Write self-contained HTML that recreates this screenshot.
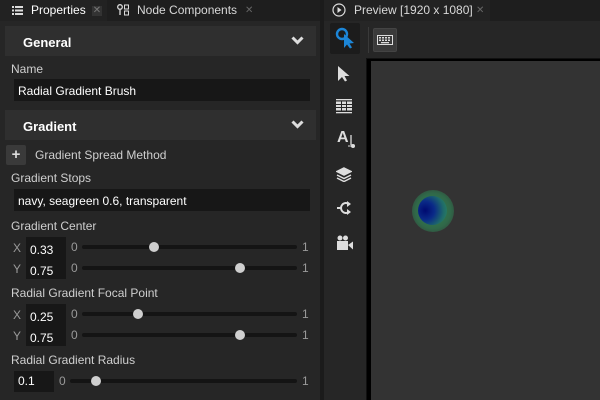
<!DOCTYPE html>
<html><head><style>
*{margin:0;padding:0;box-sizing:border-box}
body{width:600px;height:400px;background:#1b1b1b;font-family:"Liberation Sans",sans-serif;font-size:12px;color:#d0d0d0;position:relative;overflow:hidden}
.a{position:absolute}
.hdr{position:absolute;left:5px;width:311px;height:30px;background:#2f2f2f;font-weight:bold;color:#fff;font-size:13px;padding:9px 0 0 18px}
.chev{position:absolute;right:12px;top:10px}
.inp{position:absolute;background:#171717;color:#fff;padding:5px 0 0 4px;height:22px}
.lbl{position:absolute;left:11px;color:#cfcfcf}
.track{position:absolute;height:4px;background:#141414;border-radius:2px}
.knob{position:absolute;width:10px;height:10px;border-radius:5px;background:#cfcfcf}
.n{position:absolute;color:#9a9a9a}
.ico{position:absolute;left:336px}
</style></head><body>
<div class="a" style="left:0;top:0;width:320px;height:21px;background:#1e1e1e"></div>
<div class="a" style="left:0;top:0;width:107px;height:21px;background:#222"></div>
<svg class="a" style="left:12px;top:6px" width="11" height="9"><g fill="#ddd"><rect x="0" y="0" width="2" height="2"/><rect x="3" y="0" width="8" height="2"/><rect x="0" y="3.5" width="2" height="2"/><rect x="3" y="3.5" width="8" height="2"/><rect x="0" y="7" width="2" height="2"/><rect x="3" y="7" width="8" height="2"/></g></svg>
<div class="a" style="left:31px;top:3px;color:#fff">Properties</div>
<div class="a" style="left:92px;top:6px;width:10px;height:10px;background:#333;color:#777;font-size:10px;line-height:10px;text-align:center">✕</div>
<svg class="a" style="left:117px;top:4px" width="13" height="12"><circle cx="3" cy="3" r="2.3" fill="none" stroke="#ddd" stroke-width="1.3"/><line x1="3" y1="6" x2="3" y2="11" stroke="#ddd" stroke-width="1.3"/><rect x="7.5" y="1" width="4" height="4" fill="none" stroke="#ddd"/><rect x="7.5" y="7" width="4" height="4" fill="none" stroke="#ddd"/></svg>
<div class="a" style="left:137px;top:3px;color:#d8d8d8">Node Components</div>
<div class="a" style="left:245px;top:5px;color:#666;font-size:10px">✕</div>
<div class="a" style="left:0;top:21px;width:320px;height:379px;background:#262626"></div>
<div class="hdr" style="top:26px">General<svg class="chev" width="13" height="9"><path d="M1.5 1.5L6.5 6.5L11.5 1.5" stroke="#ddd" stroke-width="3" fill="none"/></svg></div>
<div class="lbl" style="top:62px">Name</div>
<div class="inp" style="left:14px;top:79px;width:296px">Radial Gradient Brush</div>
<div class="hdr" style="top:110px">Gradient<svg class="chev" width="13" height="9"><path d="M1.5 1.5L6.5 6.5L11.5 1.5" stroke="#ddd" stroke-width="3" fill="none"/></svg></div>
<div class="a" style="left:6px;top:145px;width:20px;height:20px;background:#3a3a3a;border-radius:2px;color:#ddd;font-weight:bold;font-size:15px;line-height:19px;text-align:center">+</div>
<div class="a" style="left:35px;top:148px;color:#cfcfcf">Gradient Spread Method</div>
<div class="lbl" style="top:171px">Gradient Stops</div>
<div class="inp" style="left:14px;top:189px;width:296px">navy, seagreen 0.6, transparent</div>
<div class="lbl" style="top:219px">Gradient Center</div>
<div class="n" style="left:13px;top:241px">X</div><div class="n" style="left:13px;top:262px">Y</div>
<div class="inp" style="left:26px;top:237px;width:40px;height:42px;padding-top:3px;line-height:21px">0.33<br>0.75</div>
<div class="n" style="left:71px;top:240px">0</div><div class="track" style="left:82px;top:245px;width:215px"></div><div class="knob" style="left:149px;top:242px"></div><div class="n" style="left:302px;top:240px">1</div>
<div class="n" style="left:71px;top:261px">0</div><div class="track" style="left:82px;top:266px;width:215px"></div><div class="knob" style="left:235px;top:263px"></div><div class="n" style="left:302px;top:261px">1</div>
<div class="lbl" style="top:286px">Radial Gradient Focal Point</div>
<div class="n" style="left:13px;top:308px">X</div><div class="n" style="left:13px;top:329px">Y</div>
<div class="inp" style="left:26px;top:304px;width:40px;height:42px;padding-top:3px;line-height:21px">0.25<br>0.75</div>
<div class="n" style="left:71px;top:307px">0</div><div class="track" style="left:82px;top:312px;width:215px"></div><div class="knob" style="left:133px;top:309px"></div><div class="n" style="left:302px;top:307px">1</div>
<div class="n" style="left:71px;top:328px">0</div><div class="track" style="left:82px;top:333px;width:215px"></div><div class="knob" style="left:235px;top:330px"></div><div class="n" style="left:302px;top:328px">1</div>
<div class="lbl" style="top:353px">Radial Gradient Radius</div>
<div class="inp" style="left:14px;top:371px;width:40px;height:21px;padding-top:3px">0.1</div>
<div class="n" style="left:59px;top:374px">0</div><div class="track" style="left:70px;top:379px;width:227px"></div><div class="knob" style="left:91px;top:376px"></div><div class="n" style="left:302px;top:374px">1</div>
<div class="a" style="left:324px;top:0;width:276px;height:21px;background:#1e1e1e"></div>
<div class="a" style="left:324px;top:0;width:166px;height:21px;background:#222"></div>
<svg class="a" style="left:332px;top:3px" width="14" height="14"><circle cx="7" cy="7" r="6" fill="none" stroke="#ddd" stroke-width="1.2"/><path d="M5.5 4L9.5 7L5.5 10Z" fill="#ddd"/></svg>
<div class="a" style="left:354px;top:3px;color:#d8d8d8">Preview [1920 x 1080]</div>
<div class="a" style="left:476px;top:5px;color:#666;font-size:10px">✕</div>
<div class="a" style="left:324px;top:21px;width:276px;height:379px;background:#262626"></div>
<div class="a" style="left:330px;top:23px;width:30px;height:31px;background:#1c1c1c;border-radius:2px"></div>
<svg class="a" style="left:335px;top:27px" width="22" height="22"><circle cx="7" cy="7" r="5" fill="none" stroke="#1c86d8" stroke-width="2.4"/><path d="M9 7L9 21L12 17.5L15 21.5L17 20.5L14.5 16.5L19 16Z" fill="#1c86d8"/></svg>
<div class="a" style="left:368px;top:27px;width:1px;height:26px;background:#3a3a3a"></div>
<div class="a" style="left:373px;top:28px;width:24px;height:24px;background:#3a3a3a;border:1px solid #444;border-radius:2px"></div>
<svg class="a" style="left:377px;top:35px" width="16" height="10"><rect x="0.5" y="0.5" width="15" height="9" fill="none" stroke="#ddd"/><g fill="#ddd"><rect x="2" y="2" width="2" height="1.5"/><rect x="5" y="2" width="2" height="1.5"/><rect x="8" y="2" width="2" height="1.5"/><rect x="11" y="2" width="2" height="1.5"/><rect x="2" y="4.5" width="2" height="1.5"/><rect x="5" y="4.5" width="2" height="1.5"/><rect x="8" y="4.5" width="2" height="1.5"/><rect x="11" y="4.5" width="2" height="1.5"/><rect x="4" y="7" width="8" height="1.3"/></g></svg>
<svg class="ico" style="top:65px" width="14" height="17"><path d="M2 1L2 16L6 12L9 16.5L11 15.5L8.5 11L13.5 11Z" fill="#ddd"/></svg>
<svg class="ico" style="top:99px" width="16" height="15"><g fill="#ddd"><rect x="0" y="0" width="16" height="1.3"/><rect x="0" y="2.5" width="16" height="9"/><rect x="0" y="13" width="16" height="1.3"/></g><g stroke="#262626" stroke-width="1"><line x1="0" y1="5.5" x2="16" y2="5.5"/><line x1="0" y1="8.5" x2="16" y2="8.5"/><line x1="5.5" y1="2.5" x2="5.5" y2="11.5"/><line x1="10.5" y1="2.5" x2="10.5" y2="11.5"/></g></svg>
<div class="a" style="left:337px;top:129px;color:#ddd;font-weight:bold;font-size:16px">A</div>
<svg class="a" style="left:348px;top:135px" width="8" height="14"><line x1="3" y1="0" x2="3" y2="10" stroke="#ddd" stroke-width="1.3"/><circle cx="5" cy="11" r="2" fill="#ddd"/><line x1="0" y1="11" x2="5" y2="11" stroke="#ddd"/></svg>
<svg class="ico" style="top:167px" width="16" height="15"><g fill="none" stroke="#ddd" stroke-width="1.5"><path d="M8 1L15 4.5L8 8L1 4.5Z" fill="#ddd"/><path d="M1 8L8 11.5L15 8"/><path d="M1 11L8 14.5L15 11"/></g></svg>
<svg class="ico" style="top:201px" width="16" height="14"><path d="M1 7L5 7M13 3A5 5 0 1 0 13 11" fill="none" stroke="#ddd" stroke-width="2"/><path d="M11 0L15 3L11 6Z M11 8L15 11L11 14Z" fill="#ddd"/></svg>
<svg class="ico" style="top:235px" width="17" height="16"><circle cx="4" cy="3" r="2.5" fill="#ddd"/><circle cx="9.5" cy="3" r="2.5" fill="#ddd"/><rect x="1" y="6" width="11" height="9" fill="#ddd"/><path d="M12 10L17 6.5L17 14.5Z" fill="#ddd"/></svg>
<div class="a" style="left:366px;top:58px;width:234px;height:342px;background:#111"></div>
<div class="a" style="left:367px;top:59px;width:233px;height:341px;background:#000"></div>
<div class="a" style="left:371px;top:61px;width:229px;height:339px;background:#333"></div>
<div class="a" style="left:412px;top:190px;width:42px;height:42px;border-radius:50%;background:radial-gradient(circle at 50% 50%,rgba(46,139,87,0.9) 0%,rgba(46,139,87,0.6) 60%,rgba(46,139,87,0) 100%)"></div>
<div class="a" style="left:418px;top:196px;width:29px;height:29px;border-radius:50%;background:radial-gradient(circle at 25% 50%,#000a70 0%,#0a2a88 35%,#1f6a6a 70%,#2e8b57 100%)"></div>
</body></html>
